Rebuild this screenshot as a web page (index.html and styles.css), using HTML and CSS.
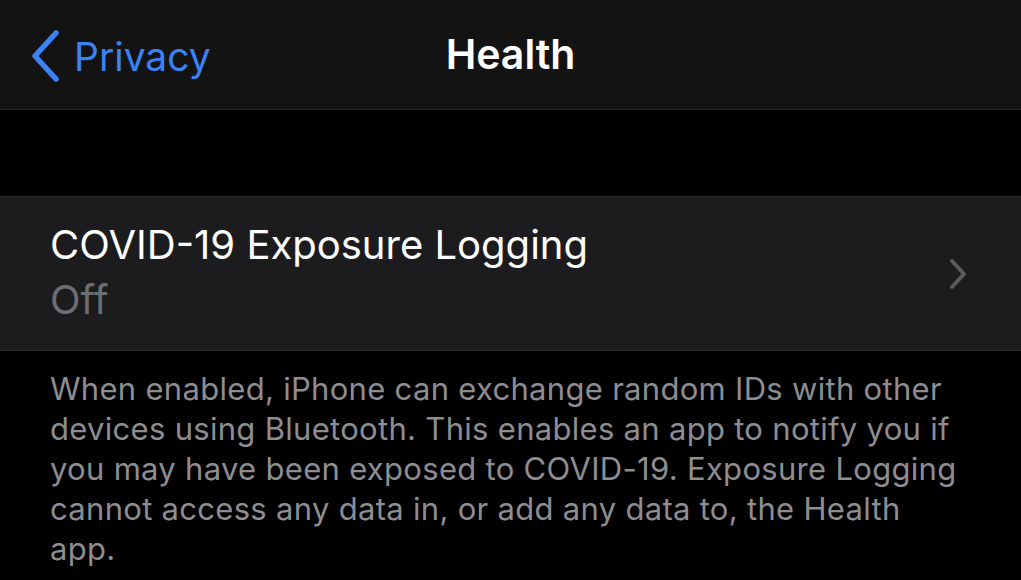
FILE: index.html
```html
<!DOCTYPE html>
<html lang="en">
  <head>
    <meta charset="UTF-8" />
    <meta name="viewport" content="width=device-width, initial-scale=1.0" />
    <title>Health</title>
    <link rel="stylesheet" href="styles.css">
  </head>
  <body>
    <div class="navbar">
      <a class="back" href="#">
        <svg class="back-icon" width="34" height="54" viewBox="0 0 34 54">
          <path d="M28 4 L7 27 L28 50" fill="none" stroke="#3b82f6" stroke-width="5.5" stroke-linecap="round" stroke-linejoin="round"/>
        </svg>
        <span>Privacy</span>
      </a>
      <div class="title">Health</div>
    </div>

    <div class="spacer"></div>

    <div class="cell">
      <div class="cell-text">
        <div class="cell-title">COVID-19 Exposure Logging</div>
        <div class="cell-value">Off</div>
      </div>
      <svg class="chevron" width="20" height="34" viewBox="0 0 20 34">
        <path d="M4 4 L16 17 L4 30" fill="none" stroke="#5c5c60" stroke-width="4" stroke-linecap="round" stroke-linejoin="round"/>
      </svg>
    </div>

    <p class="footer">
      When enabled, iPhone can exchange random IDs with other devices using Bluetooth. This enables an app to notify you if you may have been exposed to COVID-19. Exposure Logging cannot access any data in, or add any data to, the Health app.
    </p>
  </body>
</html>
```

FILE: styles.css
```css
body {
  margin: 0;
  padding: 0;
  font-family: Inter, "Noto Sans", sans-serif;
  background-color: #000;
  color: #fff;
  height: 580px;
  overflow: hidden;
}

.navbar {
  position: relative;
  height: 110px;
  background-color: #131313;
  border-bottom: 1px solid #262626;
  display: flex;
  align-items: center;
  justify-content: center;
  box-sizing: border-box;
}

.back {
  position: absolute;
  left: 28px;
  top: 29px;
  display: flex;
  align-items: center;
  gap: 12px;
  color: #3b82f6;
  text-decoration: none;
  font-size: 39px;
}

.title {
  font-size: 41px;
  font-weight: 600;
  padding-bottom: 2px;
}

.spacer {
  height: 86px;
}

.cell {
  height: 155px;
  background-color: #1c1c1e;
  border-top: 1px solid #2c2c2e;
  border-bottom: 1px solid #2c2c2e;
  box-sizing: border-box;
  display: flex;
  align-items: center;
  padding: 0 53px 0 50px;
}

.cell-text {
  flex: 1;
  padding-bottom: 4px;
}

.cell-title {
  font-size: 40px;
  line-height: 55px;
}

.cell-value {
  font-size: 40px;
  line-height: 55px;
  color: #6e6e72;
}

.footer {
  margin: 0;
  padding: 18px 50px 0 50px;
  font-size: 31px;
  letter-spacing: 0.3px;
  line-height: 40px;
  color: #8d8d92;
}
```
